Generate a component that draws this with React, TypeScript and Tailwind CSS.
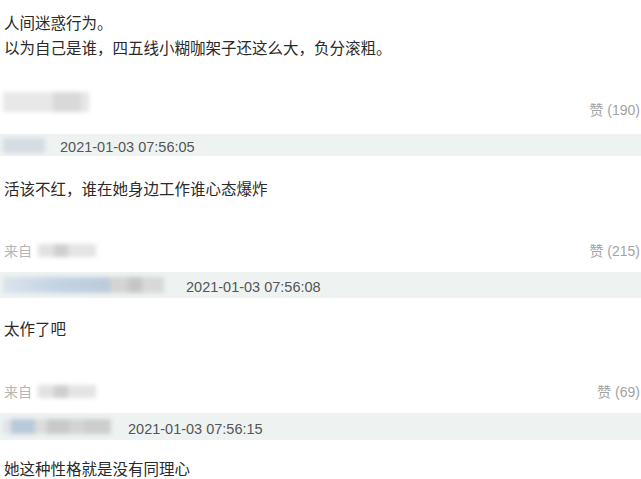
import React from "react";

const cjk = { fontFamily: '"Noto Sans CJK SC", "Noto Sans", sans-serif' };
const lat = { fontFamily: '"Liberation Sans", Arial, "Noto Sans CJK SC", sans-serif' };

function Likes({ n }: { n: string }) {
  return (
    <div className="text-[14px] leading-[16px] text-[#a3a3a3] pr-[1px]" style={lat}>
      <span style={cjk}>赞</span> ({n})
    </div>
  );
}

function FromLabel() {
  return (
    <div className="flex items-center h-full pl-[4px]">
      <span className="text-[14px] text-[#b5b5b5] leading-[16px]" style={cjk}>来自</span>
      <div className="ml-[6px] flex items-center blur-[2px]">
        <div className="w-[16px] h-[13px] bg-[#e2e2e2]" />
        <div className="w-[14px] h-[13px] bg-[#cfcfcf]" />
        <div className="w-[28px] h-[13px] bg-[#e4e4e4]" />
      </div>
    </div>
  );
}

function DateText({ t }: { t: string }) {
  return (
    <span className="text-[14.5px] text-[#555555] leading-[16px]" style={lat}>
      {t}
    </span>
  );
}

export default function App() {
  return (
    <div className="w-[641px] h-[479px] bg-white overflow-hidden text-[#2a2a2a]" style={cjk}>
      <div className="pt-[10px] pl-[4px] text-[15.5px] leading-[25px]">
        <div>人间迷惑行为。</div>
        <div>以为自己是谁，四五线小糊咖架子还这么大，负分滚粗。</div>
      </div>

      {/* Row 1 */}
      <div className="mt-[28px] h-[30px] flex justify-between">
        <div className="self-start mt-[4px] ml-[3px] h-[20px] w-[88px] flex blur-[2px]">
          <div className="w-[50px] h-full bg-[#e8e8e8]" />
          <div className="w-[28px] h-full bg-[#d9d9d9]" />
          <div className="w-[8px] h-full bg-[#e6e6e6]" />
        </div>
        <div className="self-end mb-[0px]">
          <Likes n="190" />
        </div>
      </div>
      <div className="mt-[16px] h-[22px] bg-[#eef3f2] flex items-center">
        <div className="ml-[3px] w-[42px] h-[15px] bg-[#d6dce2] blur-[2px]" />
        <div className="ml-[15px]">
          <DateText t="2021-01-03 07:56:05" />
        </div>
      </div>
      <div className="mt-[20px] pl-[4px] text-[15.5px] leading-[24px]">
        活该不红，谁在她身边工作谁心态爆炸
      </div>

      {/* Row 2 */}
      <div className="mt-[38px] h-[24px] flex justify-between items-center">
        <FromLabel />
        <Likes n="215" />
      </div>
      <div className="mt-[10px] h-[26px] bg-[#eef3f2] flex items-center">
        <div className="ml-[3px] flex items-center blur-[2px]">
          <div className="w-[107px] h-[16px] bg-gradient-to-r from-[#dbe4ec] via-[#c4d3e2] to-[#bccbdb]" />
          <div className="w-[18px] h-[16px] bg-[#d4d4d4]" />
          <div className="w-[14px] h-[16px] bg-[#c6c6c6]" />
          <div className="w-[22px] h-[16px] bg-[#d8d8d8]" />
        </div>
        <div className="ml-[22px]">
          <DateText t="2021-01-03 07:56:08" />
        </div>
      </div>
      <div className="mt-[18px] pl-[4px] text-[15.5px] leading-[24px]">太作了吧</div>

      {/* Row 3 */}
      <div className="mt-[39px] h-[24px] flex justify-between items-center">
        <FromLabel />
        <Likes n="69" />
      </div>
      <div className="mt-[10px] h-[27px] bg-[#eef3f2] flex items-center">
        <div className="ml-[3px] flex items-center blur-[2px]">
          <div className="w-[8px] h-[15px] bg-[#dfe3e8]" />
          <div className="w-[24px] h-[15px] bg-[#b9c9da]" />
          <div className="w-[12px] h-[15px] bg-[#dcdcdc]" />
          <div className="w-[22px] h-[15px] bg-[#c9c9c9]" />
          <div className="w-[16px] h-[15px] bg-[#d3d3d3]" />
          <div className="w-[26px] h-[15px] bg-[#cdcdcd]" />
        </div>
        <div className="ml-[17px]">
          <DateText t="2021-01-03 07:56:15" />
        </div>
      </div>
      <div className="mt-[16px] pl-[4px] text-[15.5px] leading-[24px]">她这种性格就是没有同理心</div>
    </div>
  );
}
